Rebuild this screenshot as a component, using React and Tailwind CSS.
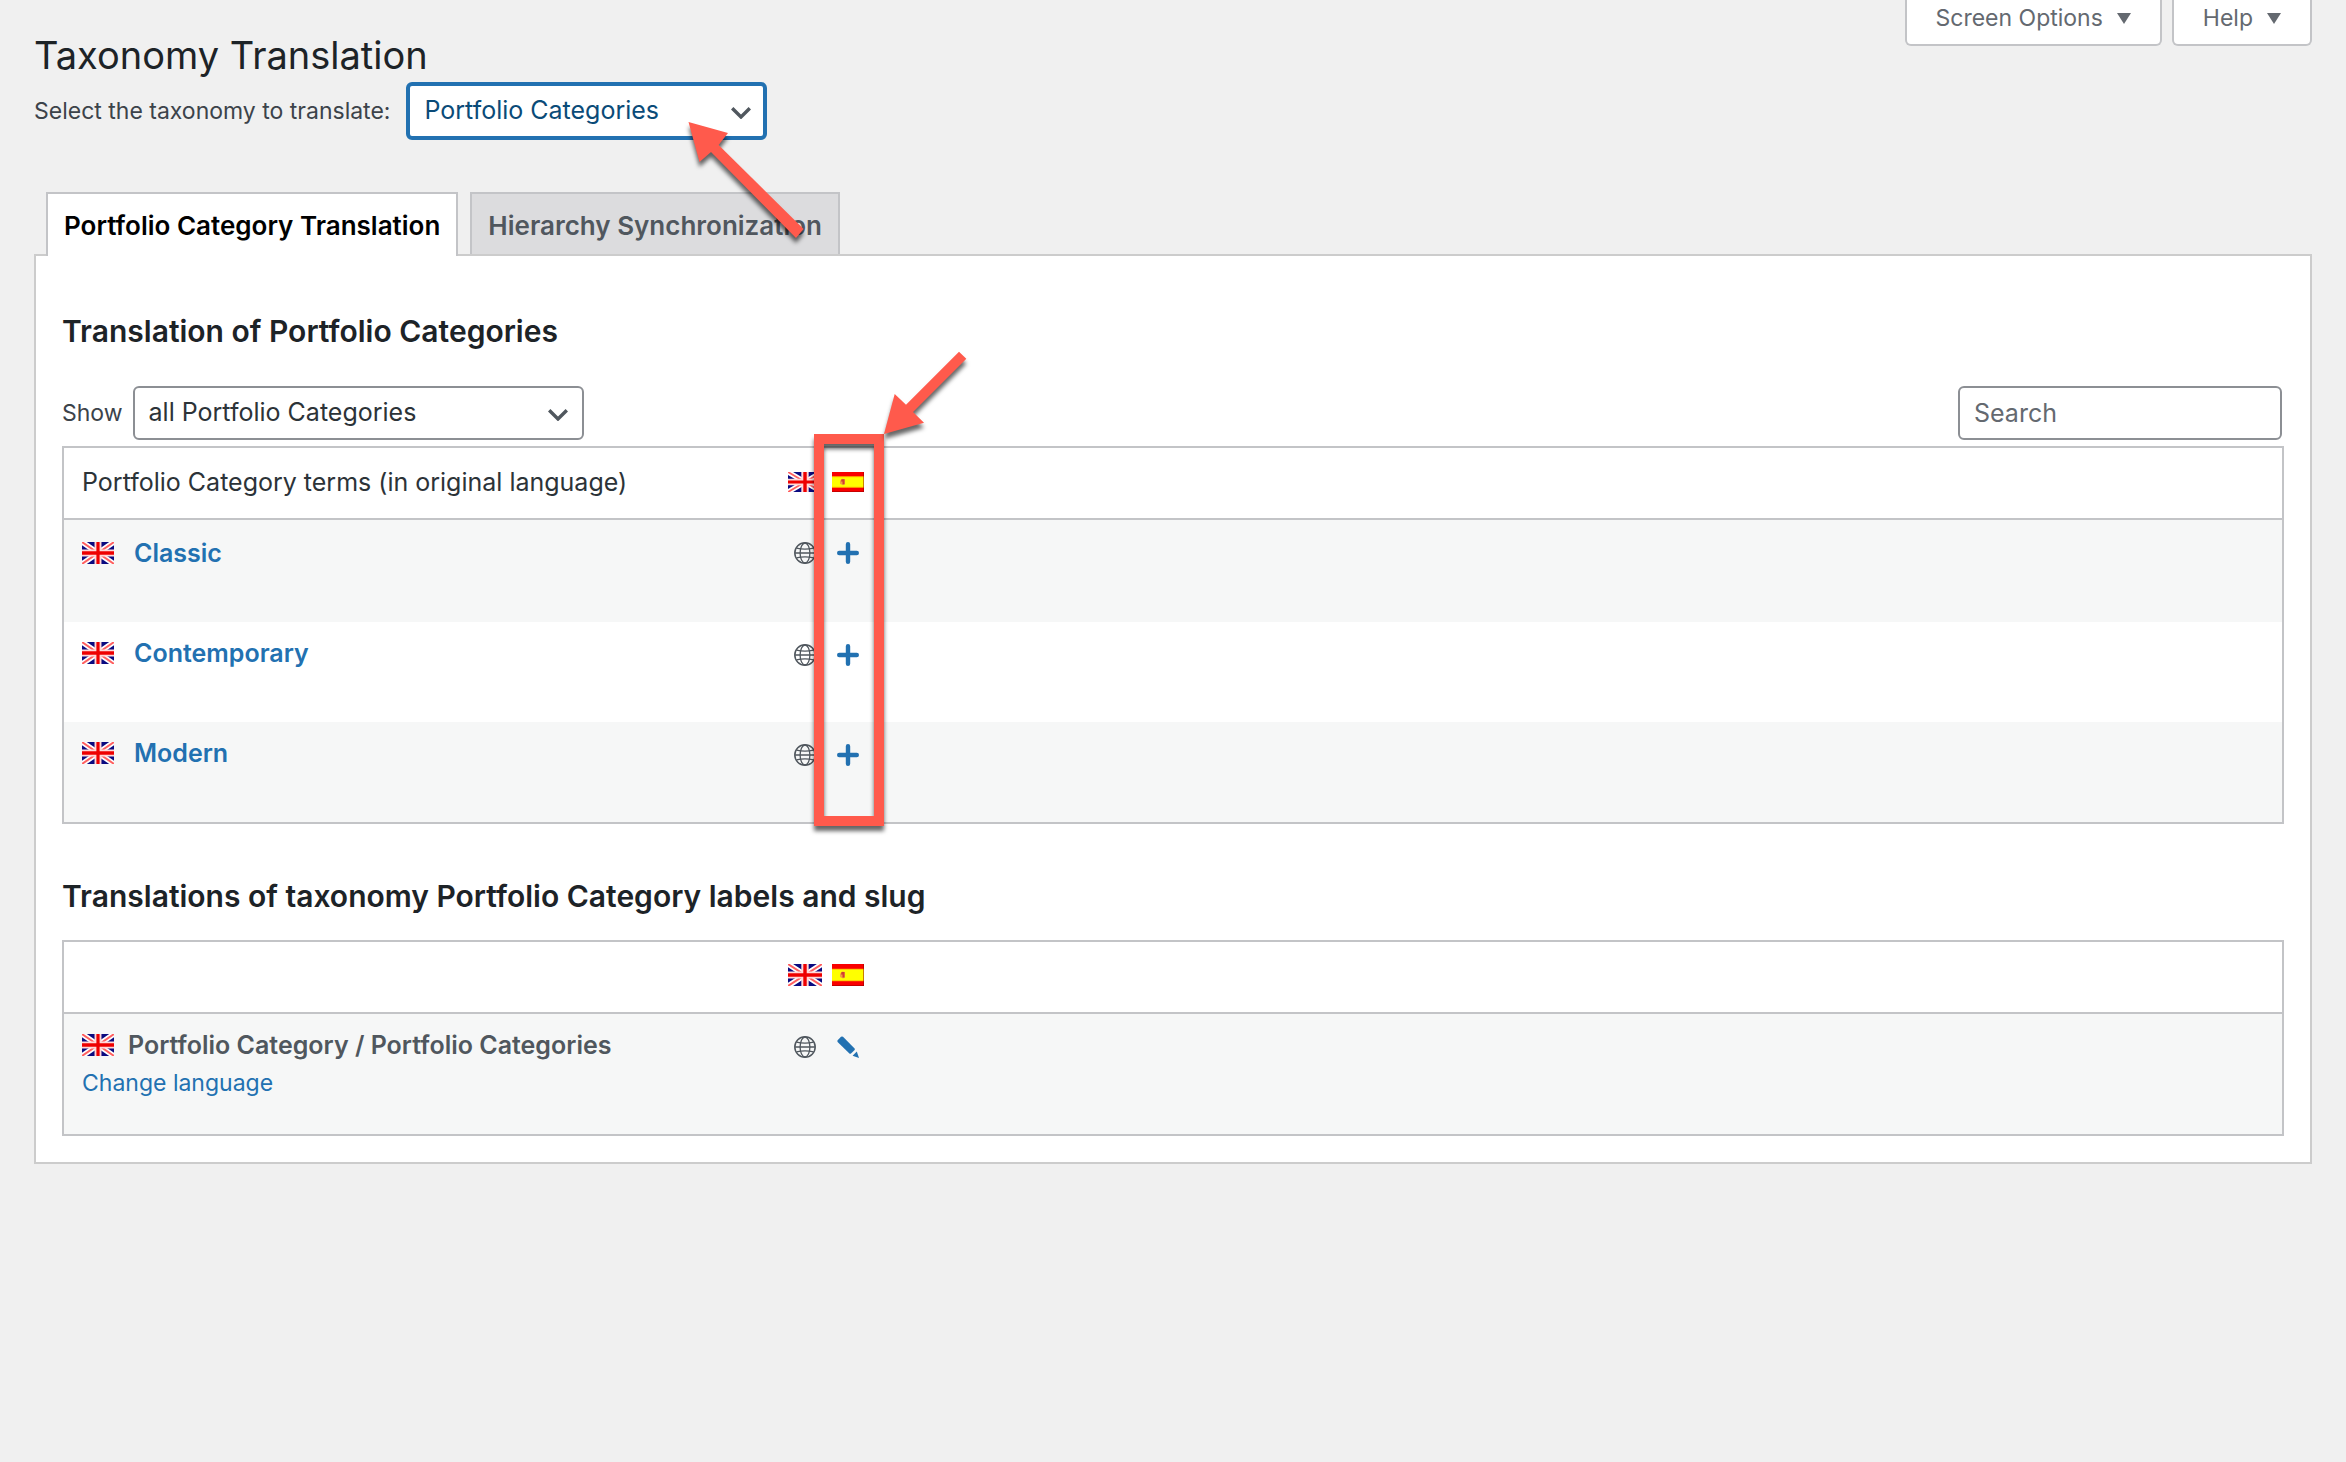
import { useState } from "react";

const FlagUK = ({ className }) => (
  <svg viewBox="0 0 60 40" preserveAspectRatio="none" className={className} role="img" aria-label="English">
    <rect width="60" height="40" fill="#0a0a80" />
    <path d="M0 0L60 40M60 0L0 40" stroke="#fff" strokeWidth="10" />
    <path d="M0 0L60 40M60 0L0 40" stroke="#ff6060" strokeWidth="3.5" />
    <path d="M30 0V40M0 20H60" stroke="#ffd8d8" strokeWidth="13" />
    <path d="M30 0V40M0 20H60" stroke="#ee0000" strokeWidth="6" />
  </svg>
);

const FlagES = ({ className }) => (
  <svg viewBox="0 0 32 22" preserveAspectRatio="none" className={className} role="img" aria-label="Spanish">
    <rect width="32" height="22" fill="#f90000" />
    <rect y="5" width="32" height="12" fill="#ffff00" />
    <path d="M0 5.2H32M0 16.8H32" stroke="#ffa800" strokeWidth="0.8" />
    <path d="M0 21.5H32M31.5 0V22" stroke="#900000" strokeOpacity="0.5" />
    <path d="M8 10L10 7.5L13 8V13.5L11 14.5L8 13Z" fill="#f0a040" />
    <path d="M9.5 8H12.5V13.5H10.5V10.5H9Z" fill="#d04030" />
  </svg>
);

const Globe = () => (
  <svg viewBox="0 0 22 22" className="w-[22px] h-[22px]" fill="none" stroke="#50575e" strokeWidth="1.3">
    <circle cx="11" cy="11" r="10.2" strokeWidth="1.5" />
    <ellipse cx="11" cy="11" rx="4.9" ry="10" />
    <path d="M1 11H21M2.4 6.2C7 7.2 15 7.2 19.6 6.2M2.4 15.8C7 14.8 15 14.8 19.6 15.8" />
  </svg>
);

const Plus = () => (
  <svg viewBox="0 0 22 22" className="w-[22px] h-[22px]" stroke="#2271b1" strokeWidth="4.4" strokeLinecap="round">
    <path d="M11 2.2V19.8M2.2 11H19.8" />
  </svg>
);

const Pencil = () => (
  <svg viewBox="0 0 22 22" className="w-[22px] h-[22px]" fill="#2271b1">
    <path d="M0.6 4.2L4 0.8Q5 0 6 0.8L17.6 12.4Q18.2 13.2 17.6 14L14 17.4Q13.2 18 12.4 17.4L0.6 6Q0 5 0.6 4.2Z" />
    <path d="M19.8 15.6L22 22L15.6 19.8Z" />
  </svg>
);

const Select = ({ id, value, onChange, options, className }) => (
  <div className="relative">
    <select id={id} value={value} onChange={onChange}
      className={`appearance-none h-[54px] pl-3.5 bg-white rounded-md outline-none text-[25px] ${className}`}>
      {options.map((o) => <option key={o}>{o}</option>)}
    </select>
    <svg viewBox="0 0 20 12" fill="none" stroke="#50575e" strokeWidth="3.4"
      className="absolute right-4 top-1/2 -mt-1 w-5 h-3 pointer-events-none">
      <path d="M1.2 1.2L10 10L18.8 1.2" />
    </svg>
  </div>
);

const HeadFlags = ({ className }) => (
  <div className="flex gap-2.5">
    <FlagUK className={`w-[34px] ${className}`} />
    <FlagES className={`w-8 ${className}`} />
  </div>
);

const Actions = ({ label, children }) => (
  <div className="flex items-center gap-2.5">
    <span className="w-[34px] flex justify-center"><Globe /></span>
    <button type="button" aria-label={label} className="w-8 flex justify-center cursor-pointer">{children}</button>
  </div>
);

const terms = ["Classic", "Contemporary", "Modern"];
const tabs = ["Portfolio Category Translation", "Hierarchy Synchronization"];

const App = () => {
  const [taxonomy, setTaxonomy] = useState("Portfolio Categories");
  const [show, setShow] = useState("all Portfolio Categories");
  const [search, setSearch] = useState("");
  const [tab, setTab] = useState(0);

  return (
    <div className="relative min-h-screen bg-[#f0f0f0] px-[34px] font-['Inter',sans-serif] text-[23px] text-[#3c434a]">

      {/* Screen meta links */}
      <div className="absolute top-0 right-[34px] flex gap-2.5 text-[#646970]">
        {["Screen Options", "Help"].map((t) => (
          <button key={t} type="button"
            className="flex items-center gap-3.5 h-[46px] pb-2 px-[29px] bg-white border-2 border-t-0 border-[#c3c4c7] rounded-b-md">
            {t}
            <svg viewBox="0 0 14 11" className="w-3.5 h-[11px]" fill="#646970"><path d="M0 0H14L7 11Z" /></svg>
          </button>
        ))}
      </div>

      <h1 className="pt-7 text-[38px] leading-[54px] text-[#1d2327]">Taxonomy Translation</h1>
      <div className="flex items-center gap-4 h-[58px]">
        <label htmlFor="taxonomy">Select the taxonomy to translate:</label>
        <Select id="taxonomy" value={taxonomy} onChange={(e) => setTaxonomy(e.target.value)}
          options={["Portfolio Categories", "Portfolio Tags"]}
          className="w-[361px] min-h-[58px] border-4 border-[#2271b1] text-[#0a4b78]" />
      </div>

      {/* Tabs */}
      <div className="flex gap-3 mt-[52px] pl-3 relative text-[26px] font-semibold">
        {tabs.map((t, i) => (
          <button key={t} type="button" onClick={() => setTab(i)}
            className={tab === i
              ? "h-16 -mb-0.5 px-4 bg-white border-2 border-b-0 border-[#c3c4c7] text-black"
              : "h-[62px] pt-0.5 px-4 bg-[#dcdcde] border-2 border-b-0 border-[#c3c4c7] text-[#50575e]"}>
            {t}
          </button>
        ))}
      </div>

      <div className="bg-white border-2 border-[#ccc] px-[26px] pb-[26px]">
        <h2 className="pt-[55px] text-3xl leading-10 font-semibold text-[#1d2327]">Translation of Portfolio Categories</h2>

        <div className="flex justify-between mt-[35px] pr-0.5">
          <div className="flex items-center gap-2.5">
            <label htmlFor="show">Show</label>
            <Select id="show" value={show} onChange={(e) => setShow(e.target.value)}
              options={["all Portfolio Categories", "untranslated Portfolio Categories"]}
              className="w-[451px] border-2 border-[#8c8f94] text-[#2c3338]" />
          </div>
          <input type="text" aria-label="Search" placeholder="Search" value={search}
            onChange={(e) => setSearch(e.target.value)}
            className="w-[324px] h-[54px] px-3.5 bg-white border-2 border-[#8c8f94] rounded-md outline-none text-[25px] text-[#2c3338] placeholder-[#646970]" />
        </div>

        {/* Terms */}
        <div className="relative mt-1.5">
          <table className="w-full table-fixed border-2 border-[#c3c4c7] border-separate border-spacing-0 text-[25px]">
            <thead>
              <tr className="h-[72px]">
                <th className="w-[724px] pl-[18px] text-left font-normal text-[#2c3338] border-b-2 border-[#c3c4c7]">
                  Portfolio Category terms (in original language)
                </th>
                <th className="pb-0.5 border-b-2 border-[#c3c4c7]"><HeadFlags className="h-5" /></th>
              </tr>
            </thead>
            <tbody>
              {terms.filter((t) => t.toLowerCase().includes(search.toLowerCase())).map((t) => (
                <tr key={t} className="group h-[100px] first:h-[102px] odd:bg-[#f6f7f7] align-top">
                  <td className="pl-[18px] pt-[15px] group-first:pt-[17px]">
                    <a href="#" className="flex items-center gap-5 leading-8 font-semibold text-[#2271b1]">
                      <FlagUK className="w-8 h-[22px]" />{t}
                    </a>
                  </td>
                  <td className="pt-[22px]"><Actions label={`Add translation of ${t}`}><Plus /></Actions></td>
                </tr>
              ))}
            </tbody>
          </table>
          {/* Highlight frame */}
          <div className="absolute -top-3 -bottom-0.5 left-[752px] w-[70px] border-10 border-[#ff5a4c] drop-shadow-[0_5px_2px_rgba(0,0,0,0.6)] pointer-events-none" />
        </div>

        <h2 className="mt-[52px] text-3xl leading-10 font-semibold text-[#1d2327]">
          Translations of taxonomy Portfolio Category labels and slug
        </h2>

        {/* Labels */}
        <table className="w-full mt-6 table-fixed border-2 border-[#c3c4c7] border-separate border-spacing-0">
          <thead>
            <tr className="h-[72px]">
              <th className="w-[724px] border-b-2 border-[#c3c4c7]"></th>
              <th className="pb-1 border-b-2 border-[#c3c4c7]"><HeadFlags className="h-[22px]" /></th>
            </tr>
          </thead>
          <tbody>
            <tr className="h-[120px] bg-[#f6f7f7] align-top">
              <td className="pl-[18px] pt-[15px]">
                <div className="flex items-center gap-3.5 text-[25px] leading-8 font-semibold text-[#50575e]">
                  <FlagUK className="w-8 h-[22px]" />Portfolio Category / Portfolio Categories
                </div>
                <a href="#" className="block mt-1.5 leading-8 text-[#2271b1]">Change language</a>
              </td>
              <td className="pt-[22px]"><Actions label="Edit labels"><Pencil /></Actions></td>
            </tr>
          </tbody>
        </table>
      </div>

      {/* Arrows */}
      <svg viewBox="0 0 300 330" fill="#ff5a4c"
        className="absolute left-[680px] top-[114px] w-[300px] h-[330px] pointer-events-none drop-shadow-[0_5px_2px_rgba(0,0,0,0.6)]">
        <path d="M8.5 8L48 19L38.6 31L123.6 115L116 124L31 38L19.5 48Z" />
        <path d="M204 320L214.7 280L226 290.7L279 237.7L286.3 244.7L233 298L244 308.7Z" />
      </svg>
    </div>
  );
};

export default App;
